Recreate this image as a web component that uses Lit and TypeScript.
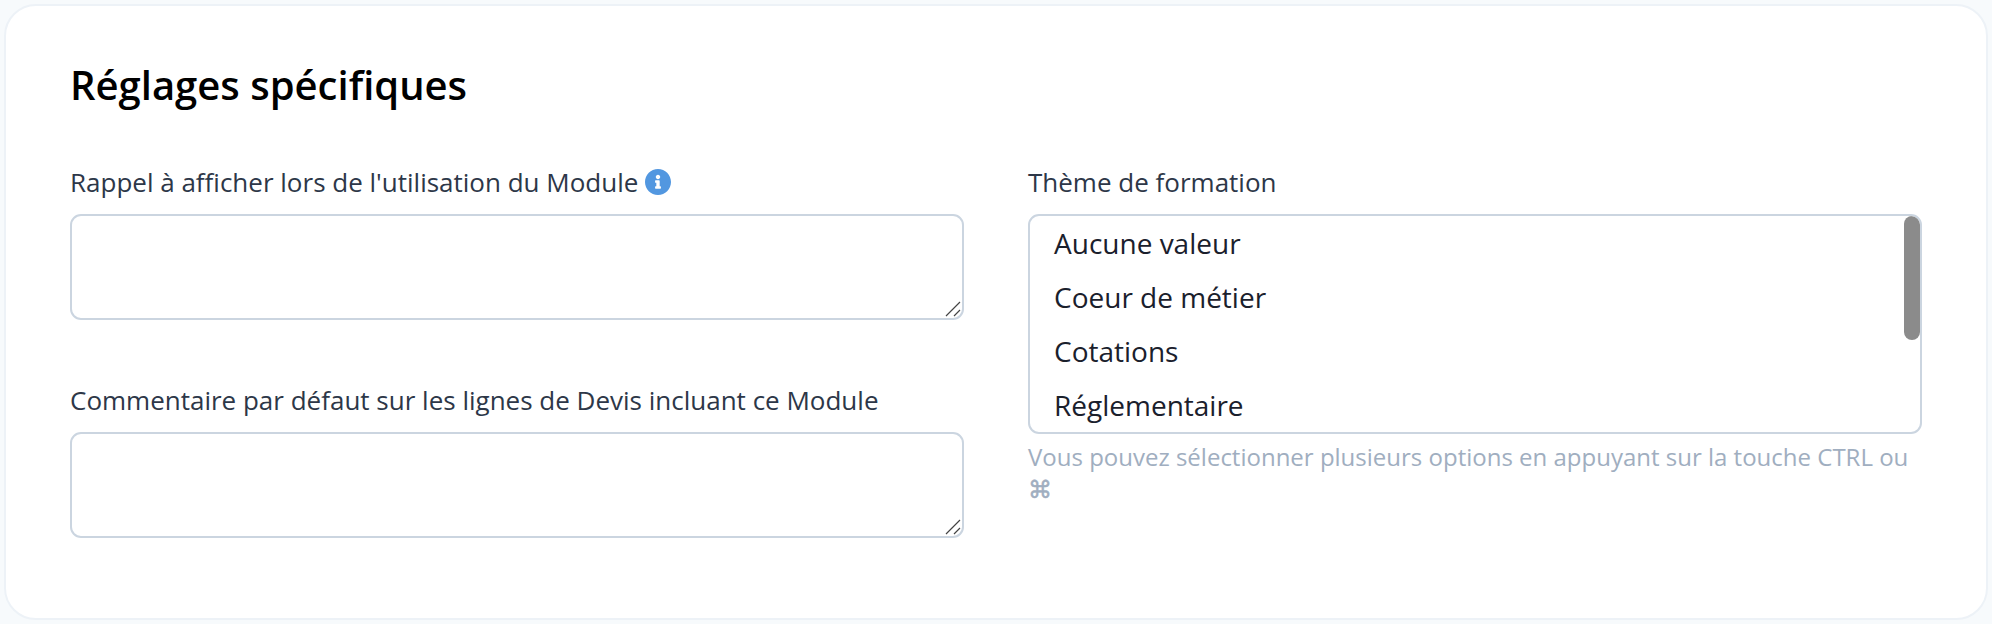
import { LitElement, html, css, svg } from "lit";
import { customElement, property } from "lit/decorators.js";

@customElement("text-area")
class TextArea extends LitElement {
  @property() label = "";
  @property({ type: Boolean }) info = false;

  static styles = css`
    :host { display: block; }
    .label { display: flex; align-items: center; gap: 7px; height: 36px; margin-bottom: 14px; font-size: 26px; line-height: 36px; color: #2d3748; white-space: nowrap; }
    .info { display: block; width: 26px; height: 26px; fill: #5297e0; }
    .box { box-sizing: border-box; height: 106px; border: 2px solid #cbd5e0; border-radius: 11px; background: #fff; display: flex; justify-content: flex-end; align-items: flex-end; padding: 0 1px 1px 0; }
    .grip { display: block; width: 18px; height: 18px; stroke: #444; stroke-width: 1.2; fill: none; }
  `;

  render() {
    return html`
      <div class="label"><span>${this.label}</span>${this.info
        ? html`<svg class="info" viewBox="8 8 496 496">${svg`<path d="M256 8C119.043 8 8 119.083 8 256c0 136.997 111.043 248 248 248s248-111.003 248-248C504 119.083 392.957 8 256 8zm0 110c23.196 0 42 18.804 42 42s-18.804 42-42 42-42-18.804-42-42 18.804-42 42-42zm56 254c0 6.627-5.373 12-12 12h-88c-6.627 0-12-5.373-12-12v-24c0-6.627 5.373-12 12-12h12v-64h-12c-6.627 0-12-5.373-12-12v-24c0-6.627 5.373-12 12-12h64c6.627 0 12 5.373 12 12v100h12c6.627 0 12 5.373 12 12v24z"/>`}</svg>`
        : null}</div>
      <div class="box"><svg class="grip" viewBox="0 0 18 18"><path d="M3 17L17 3M11 17L17 11" /></svg></div>
    `;
  }
}

@customElement("multi-select")
class MultiSelect extends LitElement {
  @property() label = "";
  @property() hint = "";
  @property({ attribute: false }) options: string[] = [];

  static styles = css`
    :host { display: block; }
    .label { height: 36px; margin-bottom: 14px; font-size: 26px; line-height: 36px; color: #2d3748; }
    .list { box-sizing: border-box; height: 220px; border: 2px solid #cbd5e0; border-radius: 11px; overflow: hidden; display: flex; justify-content: space-between; }
    .options { padding-left: 24px; font-size: 28px; color: #1a202c; }
    .option { height: 54px; line-height: 54px; }
    .thumb { width: 16px; height: 124px; border-radius: 8px; background: #8b8b8b; }
    .hint { margin-top: 7px; font-size: 24px; line-height: 32px; color: #a0aec0; }
    .key { font-family: "DejaVu Sans", sans-serif; -webkit-text-stroke: 0.5px #a0aec0; }
  `;

  render() {
    return html`
      <div class="label">${this.label}</div>
      <div class="list">
        <div class="options">${this.options.map((o) => html`<div class="option">${o}</div>`)}</div>
        <div class="thumb"></div>
      </div>
      <div class="hint">${this.hint}<br /><span class="key">⌘</span></div>
    `;
  }
}

@customElement("app-root")
class AppRoot extends LitElement {
  static styles = css`
    :host { display: block; box-sizing: border-box; height: 624px; padding: 4px; background: #f7fafc; font-family: "Open Sans", sans-serif; }
    .card { box-sizing: border-box; height: 616px; border: 2px solid #edf2f7; border-radius: 32px; background: #fff; padding: 49px 64px 0; }
    .title { margin: 0; height: 60px; font-size: 40px; line-height: 60px; font-weight: 600; color: #000; }
    .grid { display: grid; grid-template-columns: 1fr 1fr; column-gap: 64px; margin-top: 49px; }
    .stack { display: flex; flex-direction: column; gap: 62px; }
  `;

  render() {
    return html`
      <section class="card">
        <h2 class="title">Réglages spécifiques</h2>
        <div class="grid">
          <div class="stack">
            <text-area label="Rappel à afficher lors de l'utilisation du Module" info></text-area>
            <text-area label="Commentaire par défaut sur les lignes de Devis incluant ce Module"></text-area>
          </div>
          <multi-select
            label="Thème de formation"
            .options=${["Aucune valeur", "Coeur de métier", "Cotations", "Réglementaire"]}
            hint="Vous pouvez sélectionner plusieurs options en appuyant sur la touche CTRL ou"
          ></multi-select>
        </div>
      </section>
    `;
  }
}
